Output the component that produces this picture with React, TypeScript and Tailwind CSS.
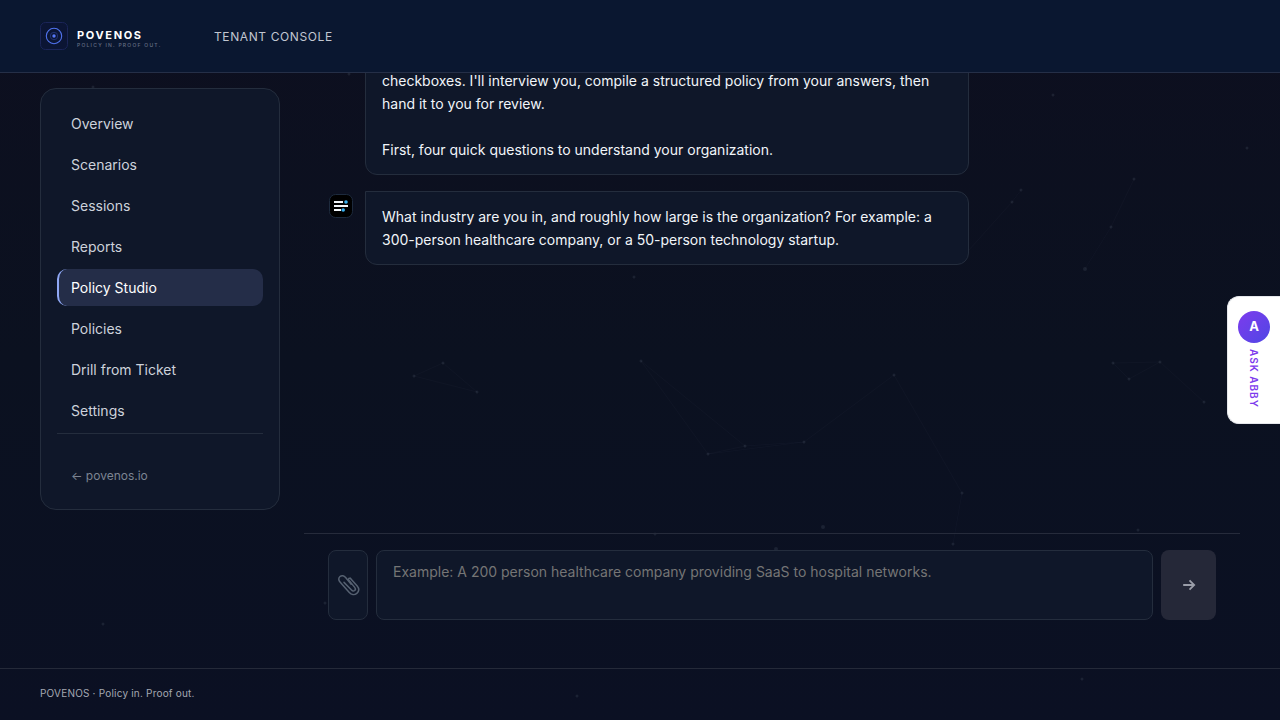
import React from "react";

const navItems = [
  "Overview",
  "Scenarios",
  "Sessions",
  "Reports",
  "Policy Studio",
  "Policies",
  "Drill from Ticket",
  "Settings",
];

const particles: [number, number, number][] = [
  [93, 87, 1.5], [349, 74, 1.5], [1053, 95, 1.5], [1247, 148, 1.5], [1134, 179, 1.5],
  [1021, 190, 1.5], [1012, 202, 1.5], [1111, 227, 1.5], [1085, 269, 2], [634, 277, 1.5],
  [443, 363, 1.5], [414, 376, 1.5], [477, 392, 1.5], [641, 361, 1.5], [894, 375, 1.5],
  [1113, 363, 1.5], [1160, 362, 1.5], [1129, 379, 1.5], [1204, 402, 1.5], [804, 442, 1.5],
  [745, 446, 1.5], [708, 454, 1.5], [962, 493, 1.5], [823, 527, 2], [655, 534, 1.5],
  [776, 549, 2], [953, 544, 1.5], [1138, 530, 1.5], [325, 603, 1.5], [103, 624, 1.5],
  [577, 696, 1.5], [1082, 679, 1.5],
];

const links: [number, number, number, number][] = [
  [708, 454, 745, 446], [745, 446, 804, 442], [708, 454, 804, 442], [641, 361, 708, 454],
  [641, 361, 745, 446], [804, 442, 894, 375], [894, 375, 962, 493], [962, 493, 953, 544],
  [1134, 179, 1111, 227], [1111, 227, 1085, 269], [1021, 190, 1012, 202], [1012, 202, 969, 250],
  [414, 376, 443, 363], [443, 363, 477, 392], [414, 376, 477, 392], [1113, 363, 1160, 362],
  [1129, 379, 1160, 362], [1113, 363, 1129, 379], [1160, 362, 1204, 402],
];

function Constellation() {
  return (
    <svg
      aria-hidden="true"
      className="pointer-events-none absolute inset-0 h-full w-full"
      viewBox="0 0 1280 720"
      preserveAspectRatio="xMidYMid slice"
    >
      {links.map(([x1, y1, x2, y2], i) => (
        <line key={i} x1={x1} y1={y1} x2={x2} y2={y2} stroke="#94a3b8" strokeOpacity="0.03" />
      ))}
      {particles.map(([x, y, r], i) => (
        <circle key={i} cx={x} cy={y} r={r} fill="#94a3b8" fillOpacity="0.12" />
      ))}
    </svg>
  );
}

function Logo() {
  return (
    <svg width="28" height="28" viewBox="0 0 28 28" aria-hidden="true">
      <rect x="0.5" y="0.5" width="27" height="27" rx="5" fill="#0b1534" stroke="#1b2558" />
      <circle cx="14" cy="14" r="7.7" fill="none" stroke="#5073ee" strokeWidth="1.1" />
      <circle cx="14" cy="14" r="3.7" fill="none" stroke="#27377f" strokeWidth="0.8" />
      <circle cx="14" cy="14" r="1.7" fill="#5577f5" />
    </svg>
  );
}

function AssistantIcon() {
  return (
    <svg width="24" height="24" viewBox="0 0 24 24" aria-hidden="true">
      <rect x="0.5" y="0.5" width="23" height="23" rx="6" fill="#000" stroke="#1d2a3d" />
      <path d="M5 8h9M5 12h14M5 16h7" strokeWidth="2" stroke="#f1f5f9" />
      <circle cx="17" cy="8" r="1.8" fill="#38b0f0" />
      <circle cx="14.2" cy="16" r="1.8" fill="#38b0f0" />
    </svg>
  );
}

function PaperclipIcon() {
  return (
    <svg width="24" height="24" viewBox="0 0 24 24" fill="none" aria-hidden="true">
      <path
        d="M15.2 11.2 9.6 4.5C8.1 2.7 5.8 2 4 3.5 2.2 5 2.5 7.2 4 8.9l9.3 10.6c2 2.3 5.1 2.9 7.5.9 2.4-2.1 2.3-5 .4-7.3L14.5 5.4"
        stroke="#566171"
        strokeWidth="1.5"
        strokeLinecap="round"
      />
      <path
        d="M14.5 5.4c-1.1-.7-2.4.3-1.8 1.5l6 7.5c.9 1.1.9 2.3 0 3.1-1 .8-2.3.6-3.2-.5L8 9.4"
        stroke="#566171"
        strokeWidth="1.5"
        strokeLinecap="round"
      />
    </svg>
  );
}

function Message({ children, continued = false }: { children: React.ReactNode; continued?: boolean }) {
  return (
    <div className="flex items-start gap-3">
      <div className="w-6 shrink-0 pt-[3px]">{!continued && <AssistantIcon />}</div>
      <div className="flex-1 whitespace-pre-line rounded-xl rounded-tl-none border border-[#242d3d] bg-[#0f1729] px-4 py-[13px] text-[14px] leading-[23px] text-[#f1f5f9]">
        {children}
      </div>
    </div>
  );
}

export default function App() {
  return (
    <div className="relative flex h-screen min-h-[600px] flex-col overflow-hidden bg-linear-to-b from-[#0d0f1f] via-[#0b1120] to-[#0b1023] font-['Inter',sans-serif] text-[#f1f5f9]">
      <Constellation />

      <header className="relative z-10 flex h-[73px] shrink-0 items-center border-b border-[#252f47] bg-[#0a1730] px-10">
        <a href="#" className="flex items-center gap-[9px]">
          <Logo />
          <span className="flex w-[97px] flex-col pt-[5px]">
            <span className="text-[11px] leading-[13px] font-bold tracking-[0.15em] text-white">POVENOS</span>
            <span className="text-[5px] leading-[7px] font-medium tracking-[0.25em] whitespace-nowrap text-[#667085]">
              POLICY IN. PROOF OUT.
            </span>
          </span>
        </a>
        <span className="ml-10 pt-px text-[12px] tracking-wider text-[#c1c6d1]">TENANT CONSOLE</span>
      </header>

      <main className="relative flex min-h-0 flex-1 gap-6 px-10">
        <aside className="mt-[15px] w-60 shrink-0 self-start rounded-2xl border border-[#242d3d] bg-[#0f1729] p-4">
          <nav className="flex flex-col gap-1">
            {navItems.map((item) => (
              <a
                key={item}
                href="#"
                aria-current={item === "Policy Studio" ? "page" : undefined}
                className={
                  item === "Policy Studio"
                    ? "rounded-[10px] border-l-2 border-[#8fa8f5] bg-[#242d48] px-3 py-2 text-[14px] leading-[21px] text-white"
                    : "rounded-[10px] border-l-2 border-transparent px-3 py-2 text-[14px] leading-[21px] text-[#cdd2db]"
                }
              >
                {item}
              </a>
            ))}
            <div className="border-t border-[#242d3d] pt-6">
              <a href="#" className="block px-[14px] py-2 text-[12px] leading-[19px] text-[#7c8492]">
                ← povenos.io
              </a>
            </div>
          </nav>
        </aside>

        <section className="flex min-w-0 flex-1 flex-col">
          <div className="flex min-h-0 flex-1 flex-col justify-end overflow-hidden pb-[268px] pl-[25px]">
            <div className="flex max-w-[640px] flex-col gap-4">
              <Message continued>
                {"checkboxes. I'll interview you, compile a structured policy from your answers, then hand it to you for review.\n\nFirst, four quick questions to understand your organization."}
              </Message>
              <Message>
                What industry are you in, and roughly how large is the organization? For example: a 300-person
                healthcare company, or a 50-person technology startup.
              </Message>
            </div>
          </div>

          <form
            className="flex gap-2 border-t border-[#262b3b] px-6 pt-4 pb-12"
            onSubmit={(e) => e.preventDefault()}
          >
            <button
              type="button"
              aria-label="Attach file"
              className="flex w-10 items-center justify-center rounded-lg border border-[#242d3d] bg-[#0f1729]"
            >
              <PaperclipIcon />
            </button>
            <textarea
              aria-label="Your answer"
              placeholder="Example: A 200 person healthcare company providing SaaS to hospital networks."
              className="block h-[70px] min-w-0 flex-1 resize-none rounded-lg border border-[#242d3d] bg-[#0f1729] px-4 py-[10px] text-[14px] leading-[22px] text-white placeholder:text-[#757575]"
            />
            <button
              type="submit"
              aria-label="Send"
              className="flex w-[55px] items-center justify-center rounded-lg bg-[#252838] text-[#9b9ea9]"
            >
              <svg width="14" height="14" viewBox="0 0 14 14" fill="none" aria-hidden="true">
                <path d="M1.2 7h11M7.5 2.3 12.2 7 7.5 11.7" stroke="currentColor" strokeWidth="1.8" />
              </svg>
            </button>
          </form>
        </section>
      </main>

      <footer className="relative flex h-[52px] shrink-0 items-center border-t border-[#252a39] px-10 pb-[2px] text-[10px] tracking-[0.02em] text-[#a4a8b2]">
        POVENOS · Policy in. Proof out.
      </footer>

      <button
        type="button"
        className="absolute top-1/2 right-0 z-20 flex h-32 w-[53px] -translate-y-1/2 flex-col items-center gap-[6px] rounded-l-xl border border-r-0 border-[#e5e7eb] bg-white pt-[14px]"
      >
        <span className="flex size-8 items-center justify-center rounded-full bg-linear-to-br from-[#7c3aed] to-[#4f46e5] text-[13px] font-bold text-white">
          A
        </span>
        <span className="text-[10px] leading-[14px] font-semibold tracking-[1px] text-[#7c3aed] [writing-mode:vertical-rl]">
          ASK ABBY
        </span>
      </button>
    </div>
  );
}
